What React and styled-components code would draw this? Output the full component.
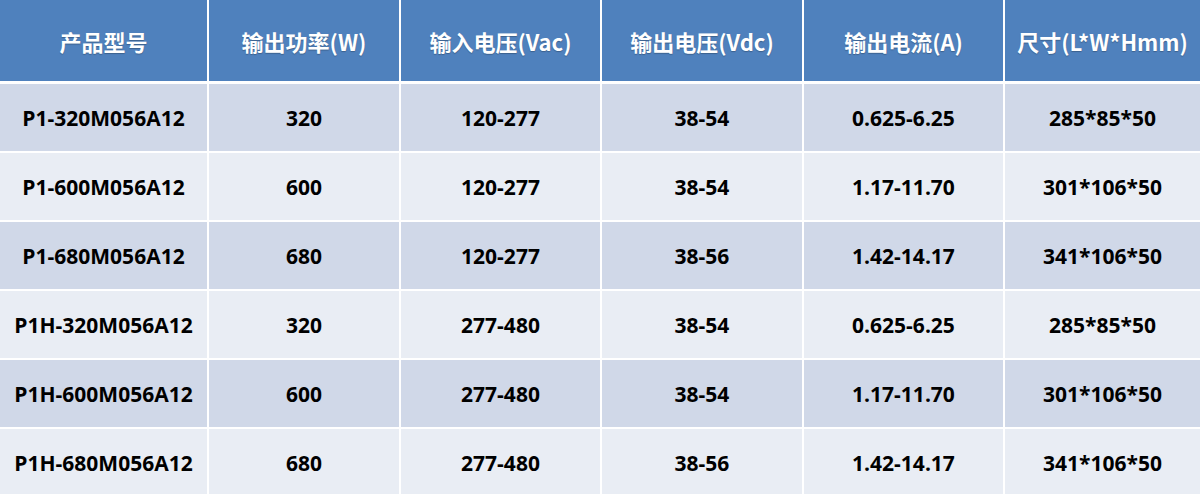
import React from 'react';
import styled, { createGlobalStyle } from 'styled-components';

const GlobalStyle = createGlobalStyle`
  html, body {
    margin: 0;
    padding: 0;
    background: #ffffff;
  }
  body {
    width: 1200px;
    height: 494px;
    overflow: hidden;
  }
`;

const Table = styled.div`
  display: grid;
  grid-template-columns: 207px 190px 199px 200px 199px 1fr;
  grid-template-rows: 82px;
  grid-auto-rows: 67px;
  column-gap: 2px;
  row-gap: 2px;
  background: #ffffff;
  width: 1200px;
`;

const HeadCell = styled.div`
  display: flex;
  align-items: center;
  justify-content: center;
  background: #4f81bd;
  color: #ffffff;
  font-family: "Noto Sans CJK SC", "Open Sans", sans-serif;
  font-weight: 700;
  font-size: 22px;
  text-shadow: 0 1px 1px rgba(0, 0, 0, 0.25);
  margin-bottom: 1px;
`;

const Cell = styled.div`
  display: flex;
  align-items: center;
  justify-content: center;
  background: ${p => (p.$dark ? '#d0d8e8' : '#e9edf4')};
  color: #000000;
  font-family: "Open Sans", sans-serif;
  font-weight: 700;
  font-size: 21px;
  padding-top: 1px;
`;

const headers = [
  '产品型号',
  '输出功率(W)',
  '输入电压(Vac)',
  '输出电压(Vdc)',
  '输出电流(A)',
  '尺寸(L*W*Hmm)'
];

const rows = [
  ['P1-320M056A12', '320', '120-277', '38-54', '0.625-6.25', '285*85*50'],
  ['P1-600M056A12', '600', '120-277', '38-54', '1.17-11.70', '301*106*50'],
  ['P1-680M056A12', '680', '120-277', '38-56', '1.42-14.17', '341*106*50'],
  ['P1H-320M056A12', '320', '277-480', '38-54', '0.625-6.25', '285*85*50'],
  ['P1H-600M056A12', '600', '277-480', '38-54', '1.17-11.70', '301*106*50'],
  ['P1H-680M056A12', '680', '277-480', '38-56', '1.42-14.17', '341*106*50']
];

export default function App() {
  return (
    <>
      <GlobalStyle />
      <Table>
        {headers.map(h => (
          <HeadCell key={h}>{h}</HeadCell>
        ))}
        {rows.map((row, i) =>
          row.map((value, j) => (
            <Cell key={`${i}-${j}`} $dark={i % 2 === 0}>
              {value}
            </Cell>
          ))
        )}
      </Table>
    </>
  );
}
